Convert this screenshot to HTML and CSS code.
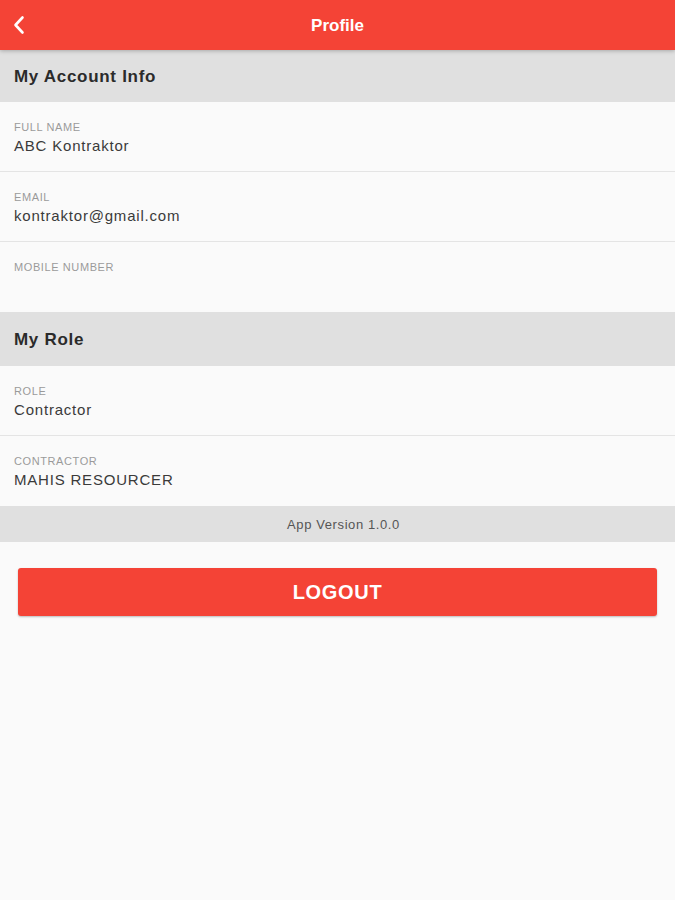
FILE: index.html
```html
<!DOCTYPE html>
<html>
<head>
<meta charset="utf-8">
<link rel="stylesheet" href="styles.css">
</head>
<body>
<div class="app">
  <header class="topbar">
    <span class="back"><svg width="14" height="20" viewBox="0 0 14 20"><path d="M10.5 2.5 L3.5 10 L10.5 17.5" fill="none" stroke="#fff" stroke-width="2.6" stroke-linecap="round" stroke-linejoin="round"/></svg></span>
    <h1 class="title">Profile</h1>
  </header>
  <div class="section">My Account Info</div>
  <div class="row"><div class="label">FULL NAME</div><div class="value">ABC Kontraktor</div></div>
  <div class="row"><div class="label">EMAIL</div><div class="value">kontraktor@gmail.com</div></div>
  <div class="row last"><div class="label">MOBILE NUMBER</div><div class="value"></div></div>
  <div class="section role">My Role</div>
  <div class="row"><div class="label">ROLE</div><div class="value">Contractor</div></div>
  <div class="row last"><div class="label">CONTRACTOR</div><div class="value">MAHIS RESOURCER</div></div>
  <div class="version">App Version 1.0.0</div>
  <div class="actions"><button class="logout">LOGOUT</button></div>
</div>
</body>
</html>
```
FILE: styles.css
```css
* { box-sizing: border-box; }
html, body { margin: 0; padding: 0; background: #fafafa; }
body { font-family: "Liberation Sans", Arial, sans-serif; height: 900px; }
.app { display: flex; flex-direction: column; }
.topbar {
  height: 50px;
  padding-top: 2px;
  background: #f44336;
  display: flex;
  align-items: center;
  justify-content: center;
  position: relative;
  box-shadow: 0 1px 4px rgba(0,0,0,0.25);
  z-index: 2;
}
.back { position: absolute; left: 12px; top: 15px; display: flex; }
.title { margin: 0; color: #fff; font-size: 17px; font-weight: 700; }
.section {
  height: 52px;
  padding: 2px 0 0 14px;
  background: #e0e0e0;
  display: flex;
  align-items: center;
  font-size: 17px;
  font-weight: 700;
  letter-spacing: 0.7px;
  color: #2b2b2b;
}
.section.role { height: 54px; }
.row {
  height: 70px;
  padding: 19px 14px 0;
  border-bottom: 1px solid #e4e4e4;
  background: #fafafa;
}
.row.last { border-bottom: none; }
.label { font-size: 11px; color: #9a9a9a; line-height: 13px; letter-spacing: 0.6px; }
.value { font-size: 15px; color: #3a3a3a; line-height: 20px; margin-top: 2px; letter-spacing: 0.8px; }
.version {
  height: 36px;
  padding-left: 12px;
  background: #e0e0e0;
  display: flex;
  align-items: center;
  justify-content: center;
  font-size: 13px;
  letter-spacing: 0.6px;
  color: #555;
}
.actions { padding: 26px 18px 0; }
.logout {
  width: 100%;
  height: 48px;
  border: none;
  border-radius: 3px;
  background: #f44336;
  color: #fff;
  font-family: "Liberation Sans", Arial, sans-serif;
  font-size: 20px;
  font-weight: 700;
  letter-spacing: 0.7px;
  box-shadow: 0 1px 2px rgba(0,0,0,0.25);
}
```
